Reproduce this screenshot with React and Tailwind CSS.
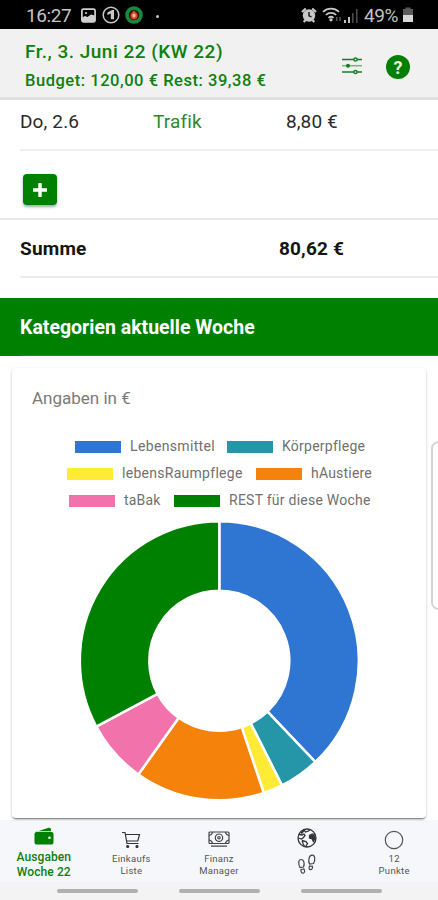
import React from "react";

const categories = [
  { name: "Lebensmittel", value: 45.5, color: "#2f76d2" },
  { name: "Körperpflege", value: 5.6, color: "#2596a8" },
  { name: "lebensRaumpflege", value: 2.7, color: "#ffeb35" },
  { name: "hAustiere", value: 18.02, color: "#f5820a" },
  { name: "taBak", value: 8.8, color: "#f272ab" },
  { name: "REST für diese Woche", value: 39.38, color: "#008000" },
];

export default function App() {
  return (
    <div className="flex h-[900px] w-[438px] flex-col overflow-hidden bg-white font-['Roboto',sans-serif] text-[#2a2a2a]">
      <StatusBar />
      <Header />
      <main className="relative flex h-[720px] shrink-0 flex-col">
        <div className="ml-5 flex h-[51px] items-center border-b-2 border-[#efefef] pb-1 text-[19px]">
          <span className="w-[133px] tracking-[0.15px]">Do, 2.6</span>
          <span className="w-[133px] tracking-[0.15px] text-[#2c8a2c]">Trafik</span>
          <span className="tracking-[0.1px]">8,80 €</span>
        </div>
        <div className="flex h-[69px] items-center border-b-2 border-[#e9e9e9] pt-2.5 pl-[23px]">
          <button className="flex h-[31px] w-[34px] items-center justify-center rounded-[4px] bg-[#008000] shadow-[0_2px_3px_rgba(0,0,0,0.35)]">
            <svg width="16" height="16" viewBox="0 0 16 16" fill="#fff">
              <path d="M6.3 1h3.4v5.3H15v3.4H9.7V15H6.3V9.7H1V6.3h5.3z" />
            </svg>
          </button>
        </div>
        <div className="ml-5 flex h-[58px] items-center border-b-2 border-[#ededed] pt-[3px] text-[19px] font-bold text-[#151515]">
          <span className="w-[259px] tracking-[0.2px]">Summe</span>
          <span className="tracking-[0.15px]">80,62 €</span>
        </div>
        <h2 className="mt-5 flex h-[58px] flex-col justify-between bg-[#008000] pl-5 text-[19.5px] font-bold text-white">
          <span className="pt-[15px] leading-[30px]">Kategorien aktuelle Woche</span>
          <span className="h-px bg-[#4d5f80]" />
        </h2>
        <ChartCard />
        <div className="absolute top-[341px] -right-2 h-[169px] w-[15px] rounded-[8px] border-2 border-[#d4d4d4] bg-white" />
      </main>
      <TabBar />
    </div>
  );
}

function StatusBar() {
  return (
    <div className="flex h-[29px] shrink-0 items-center bg-black pt-[3px] pl-[26px] text-[19px] text-[#c4c4c4]">
      <span className="w-[55px] tracking-[-0.4px]">16:27</span>
      <svg width="15" height="15" viewBox="0 0 15 15" className="-mt-0.5">
        <rect x="0.9" y="1.2" width="13.2" height="12.6" rx="1.5" fill="none" stroke="#cfcfcf" strokeWidth="1.7" />
        <path d="M1 9.5 4 8l2.5 1L10 6.5l4 1V14H1z" fill="#cfcfcf" />
        <circle cx="5" cy="5" r="1.1" fill="#cfcfcf" />
      </svg>
      <svg width="18" height="18" viewBox="0 0 18 18" className="-mt-0.5 ml-[6px]">
        <circle cx="9" cy="9" r="7.8" fill="none" stroke="#c8c8c8" strokeWidth="1.5" />
        <path d="M5.4 6.4 10 4h2v9.3H8.8V7.6L5.4 9z" fill="#c8c8c8" />
      </svg>
      <svg width="18" height="18" viewBox="0 0 18 18" className="-mt-0.5 ml-[5px]">
        <circle cx="9" cy="9" r="7" fill="#33130b" stroke="#188a3e" strokeWidth="3.6" />
        <path d="M9 4.5c2.8 2 4 4 3.6 6.2A3.6 3.6 0 0 1 9 13.4a3.6 3.6 0 0 1-3.6-2.7C5 8.5 6.5 6.5 9 4.5z" fill="#d9432f" />
        <ellipse cx="9" cy="9.5" rx="1.6" ry="2" fill="#ffc66b" />
      </svg>
      <span className="ml-[13px] h-[3px] w-[3px] rounded-full bg-[#c4c4c4]" />
      <svg width="16" height="16" viewBox="0 0 16 16" className="-mt-0.5 ml-[142px]">
        <circle cx="8" cy="8.5" r="6.2" fill="#c8c8c8" />
        <path d="M1 5 4.8 1.5M15 5 11.2 1.5M2.7 15l2-2M13.3 15l-2-2" stroke="#c8c8c8" strokeWidth="2.2" />
        <path d="M8 5v3.8l2.5 1" fill="none" stroke="#111" strokeWidth="1.4" />
      </svg>
      <svg width="20" height="16" viewBox="0 0 20 16" className="-mt-0.5 ml-[5px]" fill="none" stroke="#c8c8c8" strokeWidth="1.7">
        <path d="M1 4.8C5.5.6 12.500.6 17 4.800M3.800 8c3-2.800 7.400-2.800 10.400 0M6.500 10.900c1.500-1.400 3.500-1.400 5 0" />
        <circle cx="9" cy="12.8" r="0.8" fill="#c8c8c8" />
        <path d="M14.700 10v4M18 10v4" stroke="#555" strokeWidth="1.5" />
      </svg>
      <svg width="15" height="15" viewBox="0 0 15 15" className="-mt-0.5 ml-px">
        <path d="M1 12h2v3H1zM5 9h2v6H5z" fill="#c4c4c4" />
        <path d="M9 5h1.600v10H9zM13 1h1.500v14H13z" fill="#4a4a4a" />
      </svg>
      <span className="ml-[6px] w-[38px] tracking-[-0.4px]">49%</span>
      <svg width="12" height="16" viewBox="0 0 12 16" className="-mt-0.5">
        <path d="M3.500.5h5V2H11v6H1V2h2.500z" fill="#5c5c5c" />
        <path d="M1 8h10v7H1z" fill="#d8d8d8" />
      </svg>
    </div>
  );
}

function Header() {
  return (
    <header className="z-10 flex h-[71px] shrink-0 border-b-[3px] border-[#e0e0e0] bg-[#f1f1f1] pl-[25px] font-medium text-[#0e800e]">
      <div className="w-[316px] pt-[9px]">
        <div className="text-[19px] leading-7 tracking-[0.5px]">Fr., 3. Juni 22 (KW 22)</div>
        <div className="text-[16.5px] leading-[30px] tracking-[0.53px]">Budget: 120,00 € Rest: 39,38 €</div>
      </div>
      <svg width="22" height="20" viewBox="0 0 22 20" className="mt-[27px]" fill="none" stroke="#16801e" strokeWidth="1.5">
        <path d="M1 3.500h20M1 16h20" />
        <path d="M1 9.700h20" strokeOpacity="0.55" />
        <circle cx="14.500" cy="3.500" r="1.600" fill="#f1f1f1" />
        <circle cx="7" cy="9.700" r="1.300" fill="#16801e" />
        <circle cx="14.500" cy="16" r="1.600" fill="#f1f1f1" />
      </svg>
      <div className="mt-[26px] ml-[23px] flex h-6 w-6 items-center justify-center rounded-full bg-[#008000] text-[18px] font-bold text-[#e6f2e6]">
        ?
      </div>
    </header>
  );
}

function ChartCard() {
  return (
    <section className="mx-3 mt-3 h-[450px] rounded-[4px] bg-white shadow-[0_2px_2px_-1px_rgba(0,0,0,0.5),0_1px_3px_rgba(0,0,0,0.18)]">
      <div className="pt-[18px] pl-5 text-[17px] leading-6 text-[#7a7a7a]">Angaben in €</div>
      <div className="mt-[23px] flex flex-col text-[14px] leading-[27px] text-[#707070]">
        <div className="flex pl-[63px]">
          <LegendItem item={categories[0]} width="w-[152px]" spacing="tracking-[0.35px]" />
          <LegendItem item={categories[1]} spacing="tracking-[0.25px]" />
        </div>
        <div className="flex pl-[55px]">
          <LegendItem item={categories[2]} width="w-[189px]" spacing="tracking-[0.28px]" />
          <LegendItem item={categories[3]} spacing="tracking-[0.2px]" />
        </div>
        <div className="flex pl-[57px]">
          <LegendItem item={categories[4]} width="w-[105px]" spacing="tracking-[0.2px]" />
          <LegendItem item={categories[5]} spacing="tracking-[0.25px]" />
        </div>
      </div>
      <Donut />
    </section>
  );
}

function LegendItem({ item, width = "", spacing }) {
  return (
    <div className={`flex items-center whitespace-nowrap ${width}`}>
      <span className="mr-[9px] h-3 w-[46px] shrink-0" style={{ backgroundColor: item.color }} />
      <span className={spacing}>{item.name}</span>
    </div>
  );
}

function Donut() {
  const outer = 139.5;
  const inner = 70;
  const total = categories.reduce((sum, c) => sum + c.value, 0);
  const point = (r, a) => `${141.3 + r * Math.sin(a)} ${140.8 - r * Math.cos(a)}`;
  let start = 0;

  return (
    <svg width="282" height="282" viewBox="0 0 282 282" className="mt-[6px] ml-[66px]">
      {categories.map((c) => {
        const a = start;
        const b = a + (c.value / total) * Math.PI * 2;
        const large = b - a > Math.PI ? 1 : 0;
        start = b;
        return (
          <path
            key={c.name}
            d={`M${point(outer, a)}A${outer} ${outer} 0 ${large} 1 ${point(outer, b)}L${point(inner, b)}A${inner} ${inner} 0 ${large} 0 ${point(inner, a)}Z`}
            fill={c.color}
            stroke="#fff"
            strokeWidth="2.5"
          />
        );
      })}
    </svg>
  );
}

function TabBar() {
  return (
    <footer className="flex h-20 shrink-0 flex-col bg-[#f3f3f3] text-[#555]">
      <nav className="grid h-[62px] grid-cols-5 bg-[#f5f7fb] text-center text-[9.5px] leading-3 tracking-[0.3px]">
        <div className="flex flex-col items-center font-medium text-[#0e800e]">
          <svg width="20" height="18" viewBox="0 0 20 18" className="mt-[7px]" fill="#008000">
            <path d="M1 5.2 14.500.8a2 2 0 0 1 2.500 1.900v1.500H3z" />
            <path d="M2.500 5h15A2 2 0 0 1 19.500 7v8.500a2 2 0 0 1-2 2h-15a2 2 0 0 1-2-2V7a2 2 0 0 1 2-2z" />
            <circle cx="15.5" cy="10.7" r="1.300" fill="#fff" />
          </svg>
          <div className="mt-[5px] text-[12px] leading-[14.5px] tracking-[0.1px]">
            Ausgaben
            <br />
            Woche 22
          </div>
        </div>
        <div className="flex flex-col items-center">
          <svg width="20" height="18" viewBox="0 0 20 18" className="mt-[11px]" fill="none" stroke="#333" strokeWidth="1.2">
            <path d="M1 1.500h3l2 11h11.500M4.500 3.500h14l-1.700 6.500H5.700" />
            <circle cx="6.700" cy="15.500" r="1" fill="#333" />
            <circle cx="16" cy="15.500" r="1" fill="#333" />
          </svg>
          <div className="mt-1">
            Einkaufs
            <br />
            Liste
          </div>
        </div>
        <div className="flex flex-col items-center">
          <svg width="22" height="18" viewBox="0 0 22 18" className="mt-[11px]" fill="none" stroke="#444" strokeWidth="1.2">
            <rect x="1" y="1" width="20" height="11.500" rx="1" />
            <circle cx="11" cy="6.700" r="3.700" />
            <circle cx="11" cy="6.700" r="1.200" />
            <path d="M1 4.500A4 4 0 0 0 4.500 1M21 4.500A4 4 0 0 1 17.500 1M1 9a4 4 0 0 1 3.500 3.500M21 9a4 4 0 0 0-3.500 3.500M3 15.200h16" />
          </svg>
          <div className="mt-1">
            Finanz
            <br />
            Manager
          </div>
        </div>
        <div className="flex flex-col items-center">
          <svg width="20" height="20" viewBox="0 0 20 20" className="mt-2" fill="none" stroke="#333" strokeWidth="1.3">
            <circle cx="10" cy="10" r="9" />
            <path d="M2 6.500 5 7l2-1 1 1.500L6.500 9.500 4.500 11 1.500 10M7 1.600 8.500 4l3-1L13 1.500M18.500 7l-3-1-3 1.500v2.500l3 1 1 3M5 12.500l4 1 1.500 2-2 3.500M5 12.500l1 3 1.500 3" />
            <path d="m13 7.500 2-1 3 1 .8 3-2.300 4-1.300-3-2.200-1.200zM3 5l3-3 2 .5L5 6z" fill="#333" stroke="none" />
          </svg>
          <svg width="20" height="22" viewBox="0 0 20 22" className="mt-[6px]" fill="none" stroke="#444" strokeWidth="1.2">
            <path d="M3 13.500C1.500 11 .8 5.500 4 5.500s3.800 4.500 2.500 7.500zM12.500 10C11 7 11.800 1.500 15 1.200s3.500 5 1.500 8.300zM4 15.500l3-.5c1 2 .8 4-.8 4.200S3.800 17.500 4 15.500zM12.500 12l3 .300c.2 2-.6 3.500-2 3.400s-1.700-1.700-1-3.700z" />
          </svg>
        </div>
        <div className="flex flex-col items-center">
          <svg width="20" height="20" viewBox="0 0 20 20" className="mt-[10px]" fill="none" stroke="#555" strokeWidth="1.2">
            <circle cx="10" cy="10" r="8.700" />
          </svg>
          <div className="mt-[3px]">
            12
            <br />
            Punkte
          </div>
        </div>
      </nav>
      <div className="flex h-[18px] gap-[41px] pt-[7px] pl-[57px]">
        <span className="h-[4px] w-[81px] rounded-full bg-[#b0b0b0]" />
        <span className="h-[4px] w-[81px] rounded-full bg-[#b0b0b0]" />
        <span className="h-[4px] w-[81px] rounded-full bg-[#b0b0b0]" />
      </div>
    </footer>
  );
}
